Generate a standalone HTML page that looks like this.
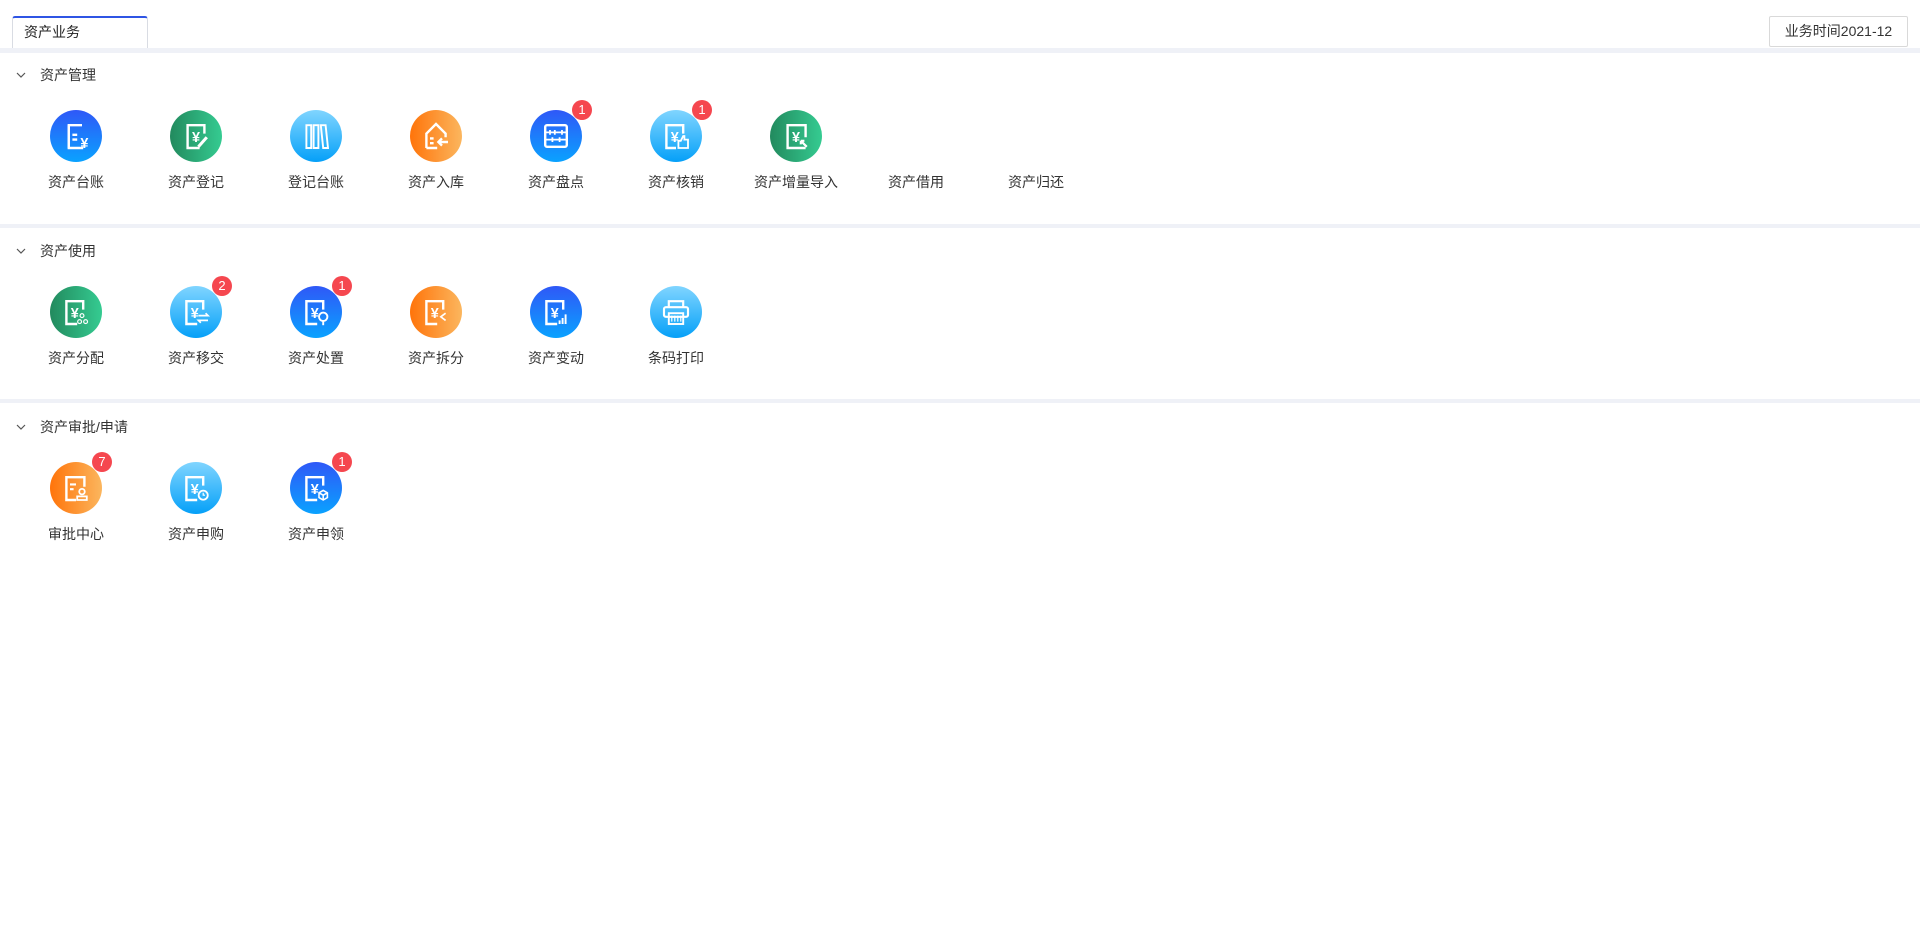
<!DOCTYPE html>
<html><head><meta charset="utf-8"><style>
*{margin:0;padding:0;box-sizing:border-box}
body{width:1920px;height:937px;background:#fff;font-family:"Liberation Sans","Noto Sans CJK SC",sans-serif;color:#333;position:relative;overflow:hidden;font-size:14px}
.tab{position:absolute;left:12px;top:16px;width:136px;height:33px;border:1px solid #d9dce3;border-top:2px solid #2f55e4;border-bottom:none;border-radius:3px 3px 0 0;padding-left:11px;line-height:29px;font-size:14px;color:#222;background:#fff}
.btn{position:absolute;left:1769px;top:16px;width:139px;height:31px;border:1px solid #d9d9d9;border-radius:2px;text-align:center;line-height:29px;font-size:14px;color:#333}
.band{position:absolute;left:0;width:1920px;background:#eff1f7}
.hd{position:absolute;left:40px;font-size:14px;color:#333;line-height:20px}
.chev{position:absolute;left:16px;width:10px;height:10px}
.it{position:absolute;width:120px;text-align:center}
.c{position:absolute;width:52px;height:52px;border-radius:50%;left:34px;top:0}
.c svg{position:absolute;left:0;top:0}
.c svg > *{transform:translate(26px,26px) scale(1.2) translate(-26px,-26px)}
.lb{position:absolute;top:62px;left:0;width:120px;text-align:center;font-size:14px;color:#333;line-height:20px;white-space:nowrap}
.bd{position:absolute;left:76px;top:-10px;width:20px;height:20px;border-radius:50%;background:#f5474f;color:#fff;font-size:13px;line-height:20px;text-align:center}
.blue{background:linear-gradient(180deg,#2f58f7,#0aa2ff)}
.green{background:linear-gradient(90deg,#228a5e,#35cb91)}
.lblue{background:linear-gradient(180deg,#80d5ff,#05a0f8)}
.orange{background:linear-gradient(90deg,#ff740a,#fbb65e)}
</style></head><body>
<div class="tab">资产业务</div>
<div class="btn">业务时间2021-12</div>
<div class="band" style="top:48px;height:5px"></div>
<div class="band" style="top:224px;height:4px"></div>
<div class="band" style="top:399px;height:4px"></div>

<svg class="chev" style="top:70px" viewBox="0 0 10 10"><path d="M1 3 L5 7 L9 3" fill="none" stroke="#555" stroke-width="1.2"/></svg>
<div class="hd" style="top:65px">资产管理</div>
<svg class="chev" style="top:246px" viewBox="0 0 10 10"><path d="M1 3 L5 7 L9 3" fill="none" stroke="#555" stroke-width="1.2"/></svg>
<div class="hd" style="top:241px">资产使用</div>
<svg class="chev" style="top:422px" viewBox="0 0 10 10"><path d="M1 3 L5 7 L9 3" fill="none" stroke="#555" stroke-width="1.2"/></svg>
<div class="hd" style="top:417px">资产审批/申请</div>

<div class="it" style="left:16px;top:110px"><div class="c blue"><svg width="52" height="52"><path d="M31 17h-11v19h12" fill="none" stroke="#fff" stroke-width="2"/><path d="M20 17v19" stroke="#fff" stroke-width="2"/><path d="M23 25h4M23 29h4" stroke="#fff" stroke-width="2"/><text x="33" y="36" fill="#fff" font-size="12" font-weight="bold" text-anchor="middle" font-family="Liberation Sans">¥</text></svg></div><div class="lb">资产台账</div></div>
<div class="it" style="left:136px;top:110px"><div class="c green"><svg width="52" height="52"><path d="M33 24v-7h-14v19h10" fill="none" stroke="#fff" stroke-width="2"/><text x="26" y="31" fill="#fff" font-size="12" font-weight="bold" text-anchor="middle" font-family="Liberation Sans">¥</text><path d="M28 35l7-8" stroke="#fff" stroke-width="2.5"/></svg></div><div class="lb">资产登记</div></div>
<div class="it" style="left:256px;top:110px"><div class="c lblue"><svg width="52" height="52"><path d="M18 17h4v19h-4zM24 17h4v19h-4zM30 17h4l2 19h-4z" fill="none" stroke="#fff" stroke-width="1.6"/></svg></div><div class="lb">登记台账</div></div>
<div class="it" style="left:376px;top:110px"><div class="c orange"><svg width="52" height="52"><path d="M18 36v-12l8-8 8 8v3M18 36h9" fill="none" stroke="#fff" stroke-width="2"/><path d="M21 28h3M21 32h3M36 31h-8M31 28l-3 3 3 3" fill="none" stroke="#fff" stroke-width="2"/></svg></div><div class="lb">资产入库</div></div>
<div class="it" style="left:496px;top:110px"><div class="c blue"><svg width="52" height="52"><rect x="17" y="17" width="18" height="18" rx="1.5" fill="none" stroke="#fff" stroke-width="2"/><path d="M17 23h18M17 29h18" stroke="#fff" stroke-width="1.5"/><path d="M21 21v4M25 21v4M31 21v4M23 27v4M29 27v4" stroke="#fff" stroke-width="1.5"/></svg></div><div class="bd">1</div><div class="lb">资产盘点</div></div>
<div class="it" style="left:616px;top:110px"><div class="c lblue"><svg width="52" height="52"><path d="M32 24v-7h-14v19h8" fill="none" stroke="#fff" stroke-width="2"/><text x="25" y="31" fill="#fff" font-size="12" font-weight="bold" text-anchor="middle" font-family="Liberation Sans">¥</text><path d="M28 36v-6h2l2-4h1v3h3v7z" fill="none" stroke="#fff" stroke-width="1.5"/></svg></div><div class="bd">1</div><div class="lb">资产核销</div></div>
<div class="it" style="left:736px;top:110px"><div class="c green"><svg width="52" height="52"><path d="M34 27v-10h-15v19h15" fill="none" stroke="#fff" stroke-width="2"/><text x="26" y="31" fill="#fff" font-size="12" font-weight="bold" text-anchor="middle" font-family="Liberation Sans">¥</text><path d="M35 35l-5-5M30 30v3M30 30h3" stroke="#fff" stroke-width="1.8" fill="none"/></svg></div><div class="lb">资产增量导入</div></div>
<div class="it" style="left:856px;top:110px"><div class="lb">资产借用</div></div>
<div class="it" style="left:976px;top:110px"><div class="lb">资产归还</div></div>

<div class="it" style="left:16px;top:286px"><div class="c green"><svg width="52" height="52"><path d="M32 24v-7h-14v19h9" fill="none" stroke="#fff" stroke-width="2"/><text x="25" y="31" fill="#fff" font-size="12" font-weight="bold" text-anchor="middle" font-family="Liberation Sans">¥</text><circle cx="31" cy="29" r="1.6" fill="none" stroke="#fff"/><circle cx="29" cy="34" r="1.6" fill="none" stroke="#fff"/><circle cx="34" cy="34" r="1.6" fill="none" stroke="#fff"/></svg></div><div class="lb">资产分配</div></div>
<div class="it" style="left:136px;top:286px"><div class="c lblue"><svg width="52" height="52"><path d="M32 24v-7h-14v19h9" fill="none" stroke="#fff" stroke-width="2"/><text x="25" y="31" fill="#fff" font-size="12" font-weight="bold" text-anchor="middle" font-family="Liberation Sans">¥</text><path d="M28 29h8l-2-2M36 33h-8l2 2" fill="none" stroke="#fff" stroke-width="1.4"/></svg></div><div class="bd">2</div><div class="lb">资产移交</div></div>
<div class="it" style="left:256px;top:286px"><div class="c blue"><svg width="52" height="52"><path d="M32 24v-7h-14v19h9" fill="none" stroke="#fff" stroke-width="2"/><text x="25" y="31" fill="#fff" font-size="12" font-weight="bold" text-anchor="middle" font-family="Liberation Sans">¥</text><circle cx="32" cy="30" r="3.5" fill="none" stroke="#fff" stroke-width="1.6"/><path d="M32 33.5v3.5" stroke="#fff" stroke-width="1.6"/></svg></div><div class="bd">1</div><div class="lb">资产处置</div></div>
<div class="it" style="left:376px;top:286px"><div class="c orange"><svg width="52" height="52"><path d="M32 24v-7h-14v19h9" fill="none" stroke="#fff" stroke-width="2"/><text x="25" y="31" fill="#fff" font-size="12" font-weight="bold" text-anchor="middle" font-family="Liberation Sans">¥</text><path d="M34 27l-4 3 4 3" fill="none" stroke="#fff" stroke-width="1.4"/></svg></div><div class="lb">资产拆分</div></div>
<div class="it" style="left:496px;top:286px"><div class="c blue"><svg width="52" height="52"><path d="M32 24v-7h-14v19h9" fill="none" stroke="#fff" stroke-width="2"/><text x="25" y="31" fill="#fff" font-size="12" font-weight="bold" text-anchor="middle" font-family="Liberation Sans">¥</text><path d="M29 36v-3M31.5 36v-5M34 36v-8" stroke="#fff" stroke-width="1.6"/></svg></div><div class="lb">资产变动</div></div>
<div class="it" style="left:616px;top:286px"><div class="c lblue"><svg width="52" height="52"><path d="M20 22v-5h12v5" fill="none" stroke="#fff" stroke-width="1.8"/><rect x="16" y="22" width="20" height="8" rx="1.5" fill="none" stroke="#fff" stroke-width="1.8"/><rect x="20" y="27" width="12" height="9" fill="none" stroke="#fff" stroke-width="1.6"/><path d="M22.5 29v5M25 29v5M27.5 29v5M30 29v5" stroke="#fff"/></svg></div><div class="lb">条码打印</div></div>

<div class="it" style="left:16px;top:462px"><div class="c orange"><svg width="52" height="52"><path d="M33 25v-8h-15v19h8" fill="none" stroke="#fff" stroke-width="2"/><path d="M21 23h5M21 27h3" stroke="#fff" stroke-width="1.8"/><circle cx="31" cy="29" r="2.3" fill="none" stroke="#fff" stroke-width="1.5"/><path d="M27 36v-3h8v3z" fill="none" stroke="#fff" stroke-width="1.5"/></svg></div><div class="bd">7</div><div class="lb">审批中心</div></div>
<div class="it" style="left:136px;top:462px"><div class="c lblue"><svg width="52" height="52"><path d="M32 24v-7h-14v19h9" fill="none" stroke="#fff" stroke-width="2"/><text x="25" y="31" fill="#fff" font-size="12" font-weight="bold" text-anchor="middle" font-family="Liberation Sans">¥</text><circle cx="32" cy="32" r="3.8" fill="none" stroke="#fff" stroke-width="1.5"/><path d="M32 30v2h1.5" stroke="#fff" fill="none"/></svg></div><div class="lb">资产申购</div></div>
<div class="it" style="left:256px;top:462px"><div class="c blue"><svg width="52" height="52"><path d="M32 24v-7h-14v19h9" fill="none" stroke="#fff" stroke-width="2"/><text x="25" y="31" fill="#fff" font-size="12" font-weight="bold" text-anchor="middle" font-family="Liberation Sans">¥</text><path d="M28.5 30l3.5-2 3.5 2v4l-3.5 2-3.5-2z M28.5 30l3.5 2 3.5-2M32 32v4" fill="none" stroke="#fff" stroke-width="1.3"/></svg></div><div class="bd">1</div><div class="lb">资产申领</div></div>
</body></html>
